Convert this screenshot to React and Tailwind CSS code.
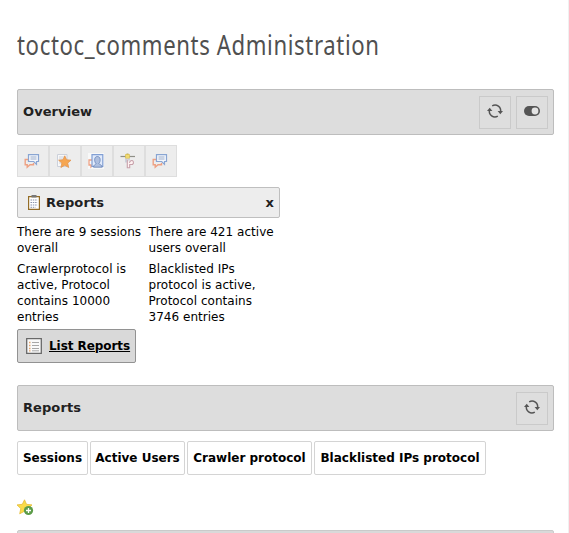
import React from "react";

const Refresh = () => (
  <svg width="16" height="16" viewBox="0 0 16 16" fill="none" stroke="#555" strokeWidth="1.5">
    <path d="M5.2 2.9A5.6 5.6 0 0 1 13.5 9" />
    <path d="M10.8 13.1A5.6 5.6 0 0 1 2.5 7" />
    <path d="M10.6 8h5.4l-2.7 3.2z" fill="#555" stroke="none" />
    <path d="M0 8h5.4l-2.7-3.2z" fill="#555" stroke="none" />
  </svg>
);

const Toggle = () => (
  <svg width="16" height="10" viewBox="0 0 16 10">
    <rect width="16" height="10" rx="5" fill="#555" />
    <circle cx="11" cy="5" r="3.4" fill="#e3e3e3" />
  </svg>
);

const Comments = () => (
  <svg width="16" height="16" viewBox="0 0 16 16" fill="none">
    <path d="M4 6.5H1.2v5.2h2v2.5L6 11.7h3.5V10" stroke="#eda184" strokeWidth="1.4" />
    <path d="M4.5 1.7h10v6.8h-2v2.8L9.7 8.5H4.5z" fill="#f4f7fc" stroke="#89a5d2" strokeWidth="1.2" />
    <path d="M6.5 4h6M6.5 6h6" stroke="#9daecb" />
  </svg>
);

const StarPage = () => (
  <svg width="16" height="16" viewBox="0 0 16 16">
    <path d="M1.5 1.5h9.5v12H1.5z" fill="#f8f8f8" stroke="#ccd1db" />
    <path d="M3 4h6M3 6h4M3 8h3M3 10h3" stroke="#ccd1db" />
    <path d="M8.8 2.8l1.8 4 4.4.4-3.3 2.9 1 4.4-3.9-2.3-3.9 2.3 1-4.4-3.3-2.9 4.4-.4z" fill="#f6a651" stroke="#e39650" strokeWidth=".8" />
  </svg>
);

const UserComment = () => (
  <svg width="16" height="16" viewBox="0 0 16 16" fill="none">
    <path d="M0 0h16v16H0z" fill="#f8f8f8" />
    <path d="M4 7H1v5h2v2l2-2" stroke="#eda184" strokeWidth="1.3" />
    <path d="M4 1.7h10.8v11.8H4z" fill="#e1eafb" stroke="#819fd4" strokeWidth="1.2" />
    <path d="M5.5 14.2c0-2.6 2.5-2.7 2.5-3.7-2-2-2-7 1.4-7s3.4 5 1.4 7c0 1 3.4 1.1 3.4 3.7z" fill="#aebfdf" stroke="#6683b8" strokeWidth=".8" />
  </svg>
);

const Pipe = () => (
  <svg width="16" height="16" viewBox="0 0 16 16" fill="none">
    <path d="M.5 3.5h14.5" stroke="#8f8f88" strokeWidth="1.2" />
    <path d="M7.5.5v4" stroke="#bba859" strokeWidth="2" />
    <path d="M5.5 1.5h4v3.8h-4z" fill="#f1db73" stroke="#d8bd4e" strokeWidth=".7" />
    <path d="M6 5.5v4M9 5.5v2" stroke="#b7c0d0" strokeWidth="1.2" />
    <path d="M7.3 6.5v8.3h2.4v-3.3h2.8c2.2-2 .4-5-2-3.6l-1.2 1.8" fill="#fff2f2" stroke="#c7a1ab" strokeWidth="1.1" />
  </svg>
);

const Clipboard = () => (
  <svg width="12" height="15" viewBox="0 0 12 15">
    <path d="M.6 1.6h10.8v12.8H.6z" fill="#fff" stroke="#946d27" strokeWidth="1.2" />
    <path d="M3.5 0h5v2.5h-5z" fill="#777" />
    <path d="M2.5 5h7M2.5 7.5h7M2.5 10h7M2.5 12.3h5" stroke="#8993aa" strokeDasharray="1.5 .8" />
  </svg>
);

const ListIcon = () => (
  <svg width="16" height="16" viewBox="0 0 16 16">
    <path d="M.7.7h14.6v14.6H.7z" fill="#fafafa" stroke="#686868" strokeWidth="1.3" />
    <path d="M3 4.5h1.5M3 7.5h1.5M3 10.5h1.5M3 12.8h1.5" stroke="#e4a46c" strokeWidth="1.3" />
    <path d="M6 4.5h7M6 7.5h7M6 10.5h7M6 12.8h7" stroke="#a8a8a8" />
  </svg>
);

const StarAdd = () => (
  <svg width="17" height="17" viewBox="0 0 17 17">
    <path d="M7.5.8l2 4.5 5.5.6-4 3.7 1.2 5.2-4.7-2.6-4.8 2.6 1.1-5.2L0 5.9l5.3-.6z" fill="#fadb48" stroke="#e4bd39" strokeWidth=".8" />
    <circle cx="11.5" cy="11.5" r="4.6" fill="#5c9c49" />
    <path d="M11.5 9v5M9 11.5h5" stroke="#fff" strokeWidth="1.3" />
  </svg>
);

const SquareButton = ({ children }) => (
  <button className="flex h-[33px] w-8 items-center justify-center border border-[#cacaca] bg-[#dedede] pb-[2px]">{children}</button>
);

const Panel = ({ title, children }) => (
  <header className="flex h-[46px] w-[537px] items-center justify-between rounded-xs border border-[#bdbdbd] bg-[#dddddd] pr-[5px] pl-[5px] text-[13px] font-bold text-[#212121]">
    <h2 className="tracking-[0.08px] whitespace-nowrap">{title}</h2>
    <div className="flex gap-[5px]">{children}</div>
  </header>
);

const tools = [Comments, StarPage, UserComment, Pipe, Comments];
const tabs = [
  ["Sessions", "w-[71px]"],
  ["Active Users", "w-[95px]"],
  ["Crawler protocol", "w-[125px]"],
  ["Blacklisted IPs protocol", "w-[172px]"],
];

export default function App() {
  return (
    <main className="h-[533px] w-[569px] overflow-hidden border-r border-[#f0f0f0] bg-white pl-[17px] font-['DejaVu_Sans',sans-serif] text-xs leading-4 text-black">
      <h1 className="h-[89px] w-[450px] origin-left scale-x-[0.82] pt-[25px] font-['Noto_Sans',sans-serif] text-[27px] leading-10 tracking-[0.76px] whitespace-nowrap text-[#505050]">
        toctoc_comments Administration
      </h1>
      <Panel title="Overview">
        <SquareButton><Refresh /></SquareButton>
        <SquareButton><Toggle /></SquareButton>
      </Panel>
      <nav className="mt-[10px] flex h-8 w-40">
        {tools.map((Icon, i) => (
          <button key={i} className="flex h-8 w-8 items-center justify-center border border-[#dedede] bg-[#ededed] pr-[2px]"><Icon /></button>
        ))}
      </nav>
      <div className="mt-[10px] flex h-[31px] w-[263px] items-center rounded-xs border border-[#bfbfbf] bg-[#ededed] px-[5px] text-[13px] font-bold text-[#212121]">
        <span className="ml-[5px]"><Clipboard /></span>
        <h3 className="ml-[6px] flex-1 tracking-[0.08px]">Reports</h3>
        <button>x</button>
      </div>
      <div className="mt-[6px] grid w-[263px] grid-cols-[131.5px_131.5px] gap-y-[5px] tracking-[0.03px] whitespace-nowrap">
        <p>There are 9 sessions<br />overall</p>
        <p>There are 421 active<br />users overall</p>
        <p>Crawlerprotocol is<br />active, Protocol<br />contains 10000<br />entries</p>
        <p>Blacklisted IPs<br />protocol is active,<br />Protocol contains<br />3746 entries</p>
      </div>
      <button className="mt-1 flex h-[34px] w-[119px] items-center rounded-xs border border-[#929292] bg-[#d9d9d9] pl-2 font-bold whitespace-nowrap">
        <ListIcon /><span className="ml-[7px] tracking-[-0.06px] underline">List Reports</span>
      </button>
      <div className="mt-[22px]">
        <Panel title="Reports"><SquareButton><Refresh /></SquareButton></Panel>
      </div>
      <nav className="mt-[10px] flex gap-[2px]">
        {tabs.map(([label, width]) => (
          <button key={label} className={`${width} flex h-[34px] items-center justify-center rounded-xs border border-[#d4d4d4] bg-white font-bold whitespace-nowrap`}>{label}</button>
        ))}
      </nav>
      <div className="mt-6 h-[31px]"><StarAdd /></div>
      <div className="h-[46px] w-[537px] rounded-xs border border-[#cacaca] bg-[#d9d9d9]" />
    </main>
  );
}
